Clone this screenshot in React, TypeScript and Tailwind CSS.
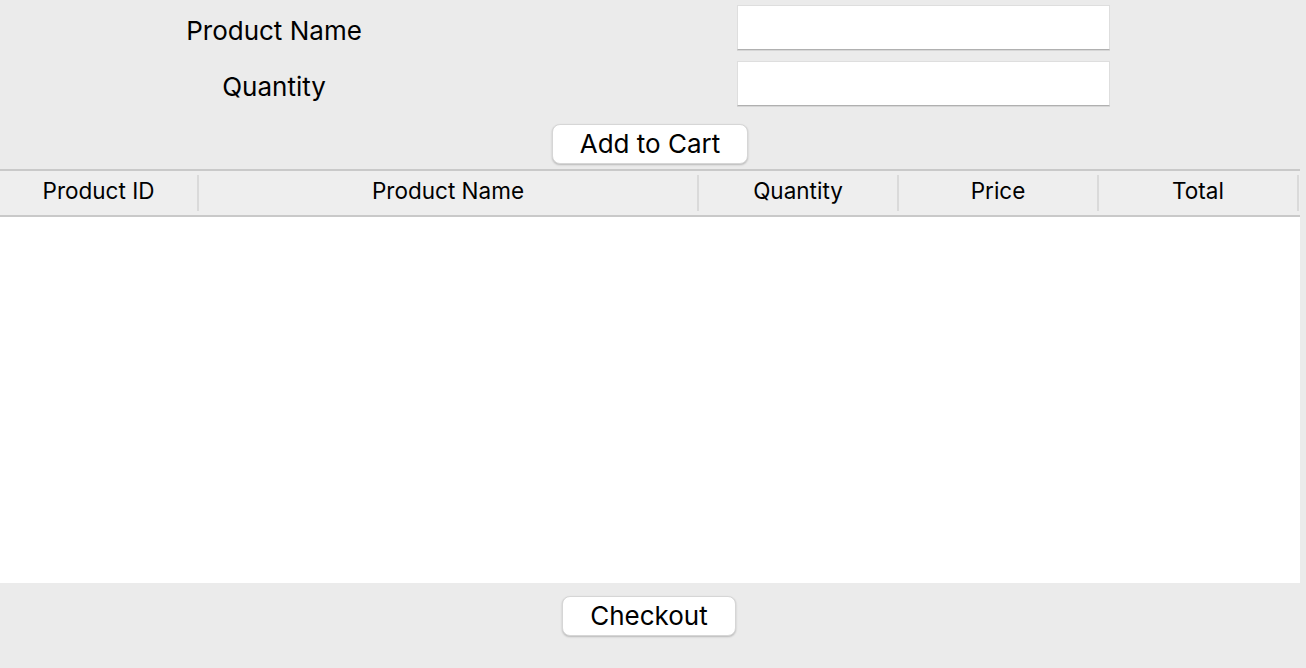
const columns = [
  { label: 'Product ID', width: 'w-[197px]' },
  { label: 'Product Name', width: 'w-[498px]' },
  { label: 'Quantity', width: 'w-[198px]' },
  { label: 'Price', width: 'w-[198px]' },
  { label: 'Total', width: 'w-[198px]' },
]

function FormRow({ label }: { label: string }) {
  return (
    <div className="flex h-[45px] items-center">
      <div className="w-[548px] pt-[6px] text-center text-[26px] leading-none text-black">{label}</div>
      <input
        type="text"
        className="ml-[189px] h-[45px] w-[373px] border border-[#dedede] border-b-[#b0b0b0] bg-white shadow-[0_1px_0_#d6d6d6] outline-none"
      />
    </div>
  )
}

function MacButton({ children, width }: { children: string; width: string }) {
  return (
    <button
      type="button"
      className={`${width} h-[40px] rounded-[8px] border border-[#d6d6d6] bg-white text-[26px] leading-none text-black shadow-[0_1px_2px_rgba(0,0,0,0.22)]`}
    >
      {children}
    </button>
  )
}

export default function App() {
  return (
    <div
      className="flex h-[668px] w-[1306px] flex-col bg-[#ebebeb]"
      style={{ fontFamily: 'Inter, "Liberation Sans", sans-serif' }}
    >
      {/* form */}
      <div className="flex flex-col gap-[11px] pt-[5px]">
        <FormRow label="Product Name" />
        <FormRow label="Quantity" />
      </div>

      <div className="mt-[18px] flex justify-center pr-[6px]">
        <MacButton width="w-[196px]">Add to Cart</MacButton>
      </div>

      {/* cart table */}
      <div className="mt-[5px] w-[1300px]">
        <div className="flex h-[48px] border-y-2 border-[#c9c9c9] bg-[#eeeeee]">
          {columns.map((col) => (
            <div key={col.label} className="flex items-center">
              <div className={`${col.width} pb-[4px] text-center text-[22.5px] leading-none text-black`}>
                {col.label}
              </div>
              <div className="h-[36px] w-[2px] bg-[#dadada]" />
            </div>
          ))}
        </div>
        <div className="h-[366px] bg-white" />
      </div>

      <div className="mt-[13px] flex justify-center pr-[8px]">
        <MacButton width="w-[174px]">Checkout</MacButton>
      </div>
    </div>
  )
}
